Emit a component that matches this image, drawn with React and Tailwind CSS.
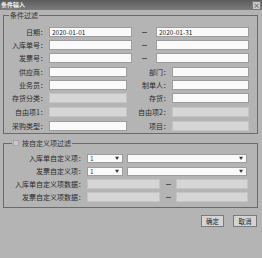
import React from 'react';

const font = { fontFamily: '"Noto Sans CJK SC", "Liberation Sans", sans-serif' };

function Field({ w, disabled, value }) {
  return (
    <div
      className={`h-[10px] ${w} border ${disabled ? 'bg-[#d6d6d6] border-[#c4c4c4]' : 'bg-[#fafafa] border-[#9c9c9c]'} text-[6.5px] leading-[8px] pl-[2px] text-[#222] overflow-hidden whitespace-nowrap`}>
      {value}
    </div>
  );
}

function Select({ w, value }) {
  return (
    <div className={`h-[9px] ${w} bg-[#fafafa] border border-[#9c9c9c] flex items-center justify-between pl-[2px] pr-[3px] text-[6.5px] leading-[7px] text-[#444]`}>
      <span>{value}</span>
      <span className="text-[4px] leading-[4px] text-[#333]">▼</span>
    </div>
  );
}

function Label({ w, children }) {
  return (
    <div className={`${w} text-right pr-[2px] text-[7px] leading-[10px] text-[#2a2a2a] whitespace-nowrap`}>
      {children}
    </div>
  );
}

function Dash({ w }) {
  return (
    <div className={`${w} flex justify-center items-center h-[10px]`}>
      <div className="w-[5px] h-px bg-[#555]"></div>
    </div>
  );
}

export default function App() {
  return (
    <div className="w-[262px] h-[258px] bg-[#b4b4b4] overflow-hidden relative" style={font}>
      {/* 标题栏 */}
      <div className="h-[10px] bg-gradient-to-b from-[#5c5c5c] to-[#7c7c7c] flex items-center justify-between">
        <span className="pl-[1px] text-[6px] leading-[8px] font-bold text-[#f2f2f2]">条件输入</span>
        <div className="w-[9px] h-[9px] mr-[1px] bg-[#c8c8c8] border border-[#777] flex items-center justify-center text-[7px] leading-[7px] text-[#333]">×</div>
      </div>

      {/* 条件过滤 */}
      <div className="relative mt-[5px] ml-[3px] w-[255px] h-[119px] border border-[#6a6a6a] pt-[11px]">
        <span className="absolute left-[5px] top-[-5px] px-[1px] bg-[#b4b4b4] text-[7px] leading-[8px] text-[#333]">条件过滤</span>
        <div className="flex">
          <Label w="w-[45px]">日期：</Label>
          <Field w="w-[83px]" value="2020-01-01" />
          <Dash w="w-[24px]" />
          <Field w="w-[93px]" value="2020-01-31" />
        </div>
        <div className="flex mt-[3px]">
          <Label w="w-[45px]">入库单号：</Label>
          <Field w="w-[83px]" />
          <Dash w="w-[24px]" />
          <Field w="w-[93px]" />
        </div>
        <div className="flex mt-[3px]">
          <Label w="w-[45px]">发票号：</Label>
          <Field w="w-[83px]" />
          <Dash w="w-[24px]" />
          <Field w="w-[93px]" />
        </div>
        <div className="flex mt-[4px]">
          <Label w="w-[45px]">供应商：</Label>
          <Field w="w-[78px]" />
          <Label w="w-[45px]">部门：</Label>
          <Field w="w-[77px]" />
        </div>
        <div className="flex mt-[3px]">
          <Label w="w-[45px]">业务员：</Label>
          <Field w="w-[78px]" />
          <Label w="w-[45px]">制单人：</Label>
          <Field w="w-[77px]" />
        </div>
        <div className="flex mt-[3px]">
          <Label w="w-[45px]">存货分类：</Label>
          <Field w="w-[78px]" disabled />
          <Label w="w-[45px]">存货：</Label>
          <Field w="w-[77px]" />
        </div>
        <div className="flex mt-[4px]">
          <Label w="w-[45px]">自由项1：</Label>
          <Field w="w-[78px]" disabled />
          <Label w="w-[45px]">自由项2：</Label>
          <Field w="w-[77px]" disabled />
        </div>
        <div className="flex mt-[4px]">
          <Label w="w-[45px]">采购类型：</Label>
          <Field w="w-[78px]" />
          <Label w="w-[45px]">项目：</Label>
          <Field w="w-[77px]" disabled />
        </div>
      </div>

      {/* 按自定义项过滤 */}
      <div className="relative mt-[9px] ml-[3px] w-[255px] h-[65px] border border-[#6a6a6a] pt-[9px]">
        <div className="absolute left-[8px] top-[-5px] px-[1px] bg-[#b4b4b4] flex items-center gap-[3px]">
          <div className="w-[6px] h-[6px] bg-[#c8c8c8] border border-[#a8a8a8]"></div>
          <span className="text-[7px] leading-[8px] text-[#333]">按自定义项过滤</span>
        </div>
        <div className="flex items-center">
          <Label w="w-[83px]">入库单自定义项：</Label>
          <Select w="w-[36px]" value="1" />
          <div className="w-[4px]"></div>
          <Select w="w-[120px]" value="" />
        </div>
        <div className="flex items-center mt-[3px]">
          <Label w="w-[83px]">发票自定义项：</Label>
          <Select w="w-[36px]" value="1" />
          <div className="w-[4px]"></div>
          <Select w="w-[120px]" value="" />
        </div>
        <div className="flex mt-[3px]">
          <Label w="w-[83px]">入库单自定义项数据：</Label>
          <Field w="w-[73px]" disabled />
          <Dash w="w-[16px]" />
          <Field w="w-[72px]" disabled />
        </div>
        <div className="flex mt-[3px]">
          <Label w="w-[83px]">发票自定义项数据：</Label>
          <Field w="w-[73px]" disabled />
          <Dash w="w-[16px]" />
          <Field w="w-[72px]" disabled />
        </div>
      </div>

      {/* 按钮 */}
      <div className="flex justify-end gap-[9px] mt-[7px] mr-[5px]">
        <button className="w-[23px] h-[12px] bg-[#d4d4d4] border border-[#7a7a7a] text-[6.5px] leading-[10px] text-[#222]">确定</button>
        <button className="w-[24px] h-[12px] bg-[#d4d4d4] border border-[#7a7a7a] text-[6.5px] leading-[10px] text-[#222]">取消</button>
      </div>
    </div>
  );
}
